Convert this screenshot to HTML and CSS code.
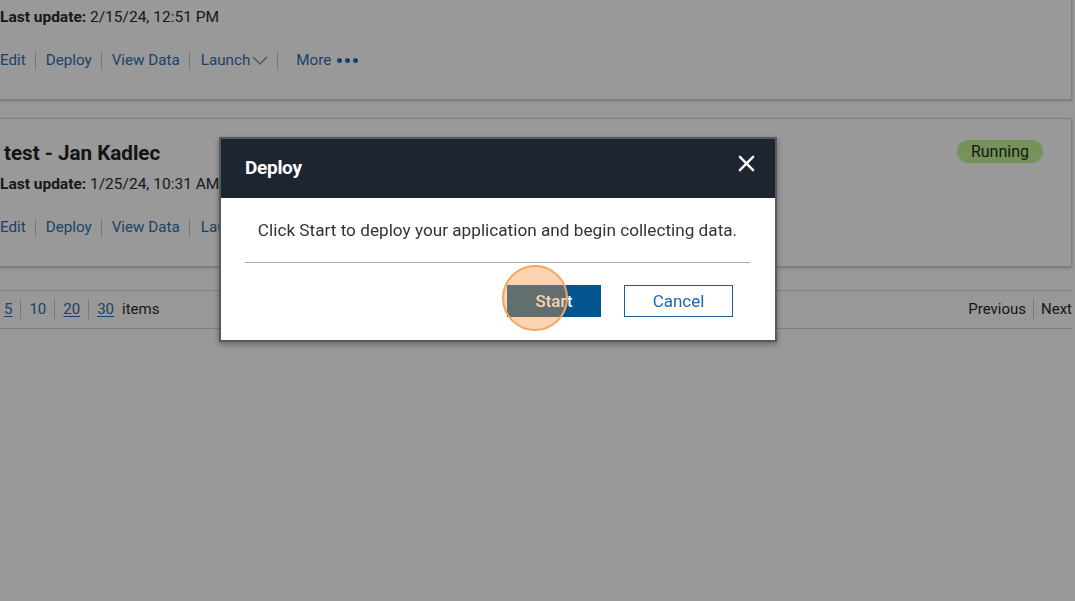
FILE: index.html
```html
<!DOCTYPE html>
<html lang="en">
<head>
<meta charset="utf-8">
<title>Deploy</title>
<link rel="stylesheet" href="styles.css">
</head>
<body>
<div class="page">
  <div class="card first">
    <div class="meta"><b>Last update:</b> 2/15/24, 12:51 PM</div>
    <div class="actions">
      <a class="act">Edit</a>
      <a class="act">Deploy</a>
      <a class="act">View Data</a>
      <a class="act launch">Launch<svg class="chev" width="16" height="9" viewBox="0 0 16 9"><path d="M1 1 L8 8 L15 1" fill="none" stroke="#8a8a8a" stroke-width="1.4"/></svg></a>
      <a class="act more">More<span class="dots"><i></i><i></i><i></i></span></a>
    </div>
  </div>
  <div class="card">
    <div class="top">
      <h2 class="title">test - Jan Kadlec</h2>
      <span class="badge">Running</span>
    </div>
    <div class="meta"><b>Last update:</b> 1/25/24, 10:31 AM</div>
    <div class="actions">
      <a class="act">Edit</a>
      <a class="act">Deploy</a>
      <a class="act">View Data</a>
      <a class="act launch">Launch<svg class="chev" width="16" height="9" viewBox="0 0 16 9"><path d="M1 1 L8 8 L15 1" fill="none" stroke="#8a8a8a" stroke-width="1.4"/></svg></a>
      <a class="act more">More<span class="dots"><i></i><i></i><i></i></span></a>
    </div>
  </div>
  <div class="pager">
    <div class="sizes">
      <a class="num u">5</a><a class="num">10</a><a class="num u">20</a><a class="num u">30</a><span class="items">items</span>
    </div>
    <div class="nav">
      <span class="pn">Previous</span><span class="pn">Next</span>
    </div>
  </div>
</div>

<div class="backdrop"></div>

<div class="modal">
  <div class="modal-head">
    <h3 class="modal-title">Deploy</h3>
    <svg class="close" width="17" height="17" viewBox="0 0 18 18"><path d="M2 2 L16 16 M16 2 L2 16" stroke="#fff" stroke-width="2.6" stroke-linecap="round"/></svg>
  </div>
  <div class="modal-body">
    <p class="msg">Click Start to deploy your application and begin collecting data.</p>
    <div class="rule"></div>
    <div class="buttons">
      <button class="btn primary">Start</button>
      <button class="btn secondary">Cancel</button>
    </div>
  </div>
  <span class="click-mark"></span>
</div>
</body>
</html>
```
FILE: styles.css
```css
html, body {
  margin: 0;
  padding: 0;
  background: #fdfdfd;
  font-family: Roboto, "Liberation Sans", Arial, sans-serif;
  color: #2a2a2a;
  overflow: hidden;
  height: 601px;
}

.page {
  margin-left: -21px;
  margin-top: -16px;
  width: 1093px;
}

.card {
  background: #fff;
  border: 1px solid #d6d6d6;
  box-shadow: 0 1px 2px rgba(0,0,0,0.25);
  padding: 22px 20px 28px 20px;
  margin-bottom: 18px;
}

.top {
  display: flex;
  justify-content: space-between;
  align-items: flex-start;
}

.title {
  margin: 0;
  font-size: 20.6px;
  line-height: 24px;
  font-weight: 700;
  padding-left: 4px;
  color: #222;
}

.badge {
  background: #c4f496;
  color: #1f2a18;
  font-size: 16px;
  line-height: 23px;
  height: 23px;
  padding: 0 14px;
  border-radius: 12px;
  margin-right: 8px;
  margin-top: -1px;
}

.meta {
  font-size: 15.5px;
  line-height: 21px;
  color: #2a2a2a;
}
.card:not(.first) .meta { margin-top: 9px; }
.meta b { font-weight: 700; }

.actions {
  display: flex;
  align-items: center;
  height: 21px;
  margin-top: 22px;
  font-size: 15.2px;
  line-height: 21px;
}

.act {
  color: #2f6eae;
  padding: 0 9px 0 10px;
  border-left: 1px solid #c8c8c8;
  display: flex;
  align-items: center;
  height: 18px;
}
.act:first-child { border-left: none; padding-left: 0; }
.launch { padding-left: 11px; }
.chev { margin-left: 2px; }
.more { padding-left: 18px; }

.dots {
  display: inline-flex;
  gap: 3px;
  margin-left: 6px;
}
.dots i {
  width: 5px;
  height: 5px;
  border-radius: 50%;
  background: #2f6eae;
  display: block;
}

.pager {
  margin-top: 23px;
  border-top: 1px solid #d6d6d6;
  border-bottom: 1px solid #d6d6d6;
  height: 35px;
  padding-bottom: 2px;
  display: flex;
  align-items: center;
  justify-content: space-between;
  padding-left: 25px;
  font-size: 15px;
  color: #2a2a2a;
}

.sizes, .nav { display: flex; align-items: center; }

.num {
  color: #2f6eae;
  padding: 0 8px;
  border-left: 1px solid #c8c8c8;
  line-height: 20px;
}
.num:first-child { border-left: none; padding-left: 0; }
.num.u { text-decoration: underline; text-underline-offset: 2px; }
.items { margin-left: 0; }

.pn {
  padding: 0 7px;
  line-height: 20px;
}
.pn + .pn { border-left: 1px solid #c8c8c8; padding-right: 0; }

.backdrop {
  position: fixed;
  inset: 0;
  background: rgba(0,0,0,0.4);
}

.modal {
  position: fixed;
  left: 219px;
  top: 137px;
  width: 554px;
  border: 2px solid #555a5e;
  background: #fff;
  box-shadow: 0 2px 6px rgba(0,0,0,0.35);
}

.modal-head {
  background: #1d2630;
  height: 59px;
  display: flex;
  align-items: center;
  justify-content: space-between;
  padding: 0 20px 0 24px;
}

.modal-title {
  margin: 0;
  color: #fff;
  font-size: 19px;
  font-weight: 700;
  letter-spacing: -0.3px;
  margin-top: -2px;
}

.close { margin-top: -10px; }

.modal-body {
  padding: 21px 25px 23px 24px;
}

.msg {
  margin: 0;
  text-align: center;
  font-size: 17.2px;
  line-height: 22px;
  color: #333;
}

.rule {
  height: 1px;
  background: #aaaaaa;
  margin-top: 21px;
}

.buttons {
  display: flex;
  justify-content: flex-end;
  gap: 23px;
  margin-top: 22px;
  padding-right: 17px;
}

.btn {
  height: 32px;
  font-family: Roboto, "Liberation Sans", Arial, sans-serif;
  font-size: 17px;
  cursor: pointer;
}

.primary {
  width: 94px;
  background: #02558f;
  color: #fff;
  border: none;
  font-weight: 500;
}

.secondary {
  width: 109px;
  background: #fff;
  color: #1d68a8;
  border: 1px solid #1d5f9c;
}

.click-mark {
  position: absolute;
  left: 281px;
  top: 126px;
  width: 62px;
  height: 62px;
  border-radius: 50%;
  background: rgba(245,150,60,0.4);
  border: 2px solid #f5a55c;
}
```
